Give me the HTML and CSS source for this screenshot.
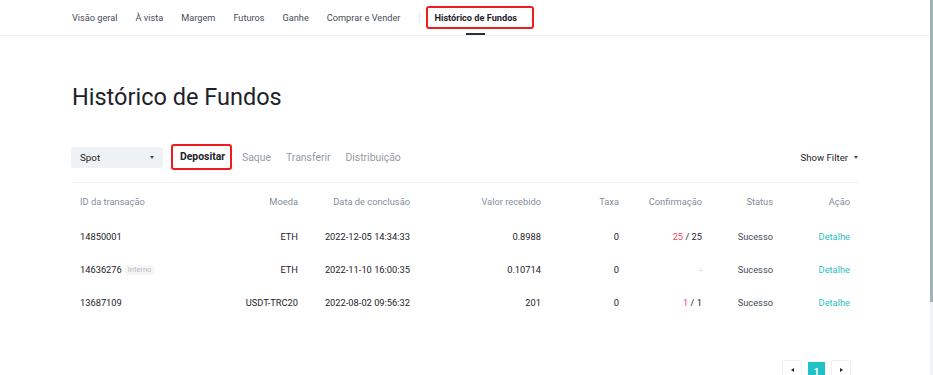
FILE: index.html
```html
<!DOCTYPE html>
<html lang="pt">
<head>
<meta charset="utf-8">
<title>Histórico de Fundos</title>
<link rel="stylesheet" href="styles.css">
</head>
<body>
<div class="screen">
  <div class="page">
    <header class="topnav">
      <nav class="nav">
        <a class="nav-item">Visão geral</a>
        <a class="nav-item">À vista</a>
        <a class="nav-item">Margem</a>
        <a class="nav-item">Futuros</a>
        <a class="nav-item">Ganhe</a>
        <a class="nav-item">Comprar e Vender</a>
        <span class="nav-sep"></span>
        <a class="nav-item nav-active"><span class="mark nav-mark">Histórico de Fundos</span><span class="nav-underline"></span></a>
      </nav>
    </header>

    <main class="content">
      <h1 class="title">Histórico de Fundos</h1>

      <div class="toolbar">
        <div class="select">Spot <span class="caret"></span></div>
        <div class="tabs">
          <span class="tab tab-active mark">Depositar</span>
          <span class="tab">Saque</span>
          <span class="tab">Transferir</span>
          <span class="tab">Distribuição</span>
        </div>
        <div class="filter">Show Filter <span class="caret"></span></div>
      </div>

      <div class="table">
        <div class="th left">ID da transação</div>
        <div class="th">Moeda</div>
        <div class="th">Data de conclusão</div>
        <div class="th">Valor recebido</div>
        <div class="th">Taxa</div>
        <div class="th">Confirmação</div>
        <div class="th">Status</div>
        <div class="th">Ação</div>

        <div class="td left">14850001</div>
        <div class="td">ETH</div>
        <div class="td">2022-12-05 14:34:33</div>
        <div class="td">0.8988</div>
        <div class="td">0</div>
        <div class="td"><span class="red">25</span>&nbsp;/ 25</div>
        <div class="td status">Sucesso</div>
        <div class="td"><a class="link">Detalhe</a></div>

        <div class="td left">14636276 <span class="tag">Interno</span></div>
        <div class="td">ETH</div>
        <div class="td">2022-11-10 16:00:35</div>
        <div class="td">0.10714</div>
        <div class="td">0</div>
        <div class="td muted">-</div>
        <div class="td status">Sucesso</div>
        <div class="td"><a class="link">Detalhe</a></div>

        <div class="td left">13687109</div>
        <div class="td">USDT-TRC20</div>
        <div class="td">2022-08-02 09:56:32</div>
        <div class="td">201</div>
        <div class="td">0</div>
        <div class="td"><span class="red">1</span>&nbsp;/ 1</div>
        <div class="td status">Sucesso</div>
        <div class="td"><a class="link">Detalhe</a></div>
      </div>

      <div class="pager">
        <span class="pg pg-arrow"><span class="tri tri-left"></span></span>
        <span class="pg pg-current">1</span>
        <span class="pg pg-arrow"><span class="tri tri-right"></span></span>
      </div>
    </main>
  </div>
  <div class="scrollbar"><div class="thumb"></div></div>
</div>
</body>
</html>
```

FILE: styles.css
```css
* { box-sizing: border-box; }

html, body {
  margin: 0;
  padding: 0;
  background: #ffffff;
}

body {
  font-family: Roboto, "Liberation Sans", Arial, sans-serif;
  color: #1e2329;
}

.screen {
  display: flex;
  height: 375px;
  overflow: hidden;
}

.page {
  flex: 1;
  min-width: 0;
}

.scrollbar {
  width: 3px;
  background: #eef3f6;
  display: flex;
  flex-direction: column;
}

.thumb {
  height: 302px;
  background: #9fb2b8;
}

/* ---------- top navigation ---------- */
.topnav {
  height: 36px;
  border-bottom: 1px solid #f1f2f3;
}

.nav {
  display: flex;
  align-items: center;
  height: 35px;
  padding-left: 72px;
}

.nav-item {
  font-size: 9.2px;
  color: #474d57;
  margin-right: 18px;
  white-space: nowrap;
}

.nav-sep {
  width: 1px;
  height: 11px;
  background: #e6e8ea;
  margin-left: 1px;
  margin-right: 6px;
}

.nav-active {
  position: relative;
  height: 35px;
  display: flex;
  align-items: center;
}

.mark {
  border: 2px solid #ee1c1c;
  border-radius: 3px;
}

.nav-mark {
  display: block;
  height: 23px;
  line-height: 15px;
  padding: 2px 15px 2px 6px;
  font-weight: 700;
  color: #1e2329;
}

.nav-underline {
  position: absolute;
  left: 50%;
  margin-left: -14.5px;
  bottom: 0;
  width: 19px;
  height: 2px;
  background: #2b3139;
}

/* ---------- content ---------- */
.content {
  padding: 0 72px;
}

.title {
  margin: 45px 0 0;
  font-size: 23.5px;
  line-height: 32px;
  font-weight: 400;
  color: #1e2329;
}

.toolbar {
  display: flex;
  align-items: center;
  height: 26px;
  margin-top: 31px;
}

.select {
  width: 92px;
  height: 21px;
  margin-left: -1px;
  padding: 0 9px;
  display: flex;
  align-items: center;
  justify-content: space-between;
  background: #eff2f5;
  border-radius: 3px;
  font-size: 9.8px;
  color: #1e2329;
}

.caret {
  display: inline-block;
  width: 0;
  height: 0;
  border-left: 2.5px solid transparent;
  border-right: 2.5px solid transparent;
  border-top: 3px solid #474d57;
}

.tabs {
  display: flex;
  align-items: center;
  margin-left: 8px;
}

.tab {
  font-size: 10.4px;
  color: #929aa5;
  margin-right: 15px;
  white-space: nowrap;
}

.tab-active {
  height: 26px;
  line-height: 18px;
  padding: 2px 5px 2px 7px;
  font-weight: 700;
  color: #1e2329;
  margin-right: 10px;
}

.filter {
  margin-left: auto;
  display: flex;
  align-items: center;
  font-size: 9.6px;
  color: #1e2329;
}

.filter .caret {
  margin-left: 6px;
}

/* ---------- table ---------- */
.table {
  margin-top: 12px;
  border-top: 1px solid #f2f3f5;
  display: grid;
  grid-template-columns: 130px 104px 112px 131px 78px 83px 71px 77px;
  grid-template-rows: 37px 33px 33px 33px;
}

.th, .td {
  display: flex;
  align-items: center;
  justify-content: flex-end;
  padding: 0 8px;
  font-size: 9.3px;
  white-space: nowrap;
}

.th {
  color: #848e9c;
  padding-bottom: 1px;
}

.td {
  color: #1e2329;
}

.left {
  justify-content: flex-start;
}

.status {
  color: #474d57;
}

.red {
  color: #f6465d;
}

.muted {
  color: #b7bdc6;
}

.link {
  color: #2dbfbf;
}

.tag {
  margin-left: 3px;
  height: 10px;
  line-height: 10px;
  padding: 0 3px;
  background: #f5f5f5;
  color: #b7bdc6;
  font-size: 7.5px;
  border-radius: 1px;
}

/* ---------- pagination ---------- */
.pager {
  margin-top: 41px;
  display: flex;
  justify-content: flex-end;
  align-items: flex-start;
  gap: 6px;
  padding-right: 7px;
}

.pg {
  display: flex;
  align-items: center;
  justify-content: center;
}

.pg-arrow {
  width: 20px;
  height: 19px;
  background: #ffffff;
  border: 1px solid #eef0f2;
  border-radius: 2px;
}

.pg-current {
  width: 17px;
  height: 18px;
  margin-top: 2px;
  background: #1ec1c4;
  color: #ffffff;
  font-size: 9.6px;
  font-weight: 700;
}

.tri {
  width: 0;
  height: 0;
  border-top: 2.5px solid transparent;
  border-bottom: 2.5px solid transparent;
}

.tri-left {
  border-right: 3px solid #1e2329;
}

.tri-right {
  border-left: 3px solid #1e2329;
}
```
